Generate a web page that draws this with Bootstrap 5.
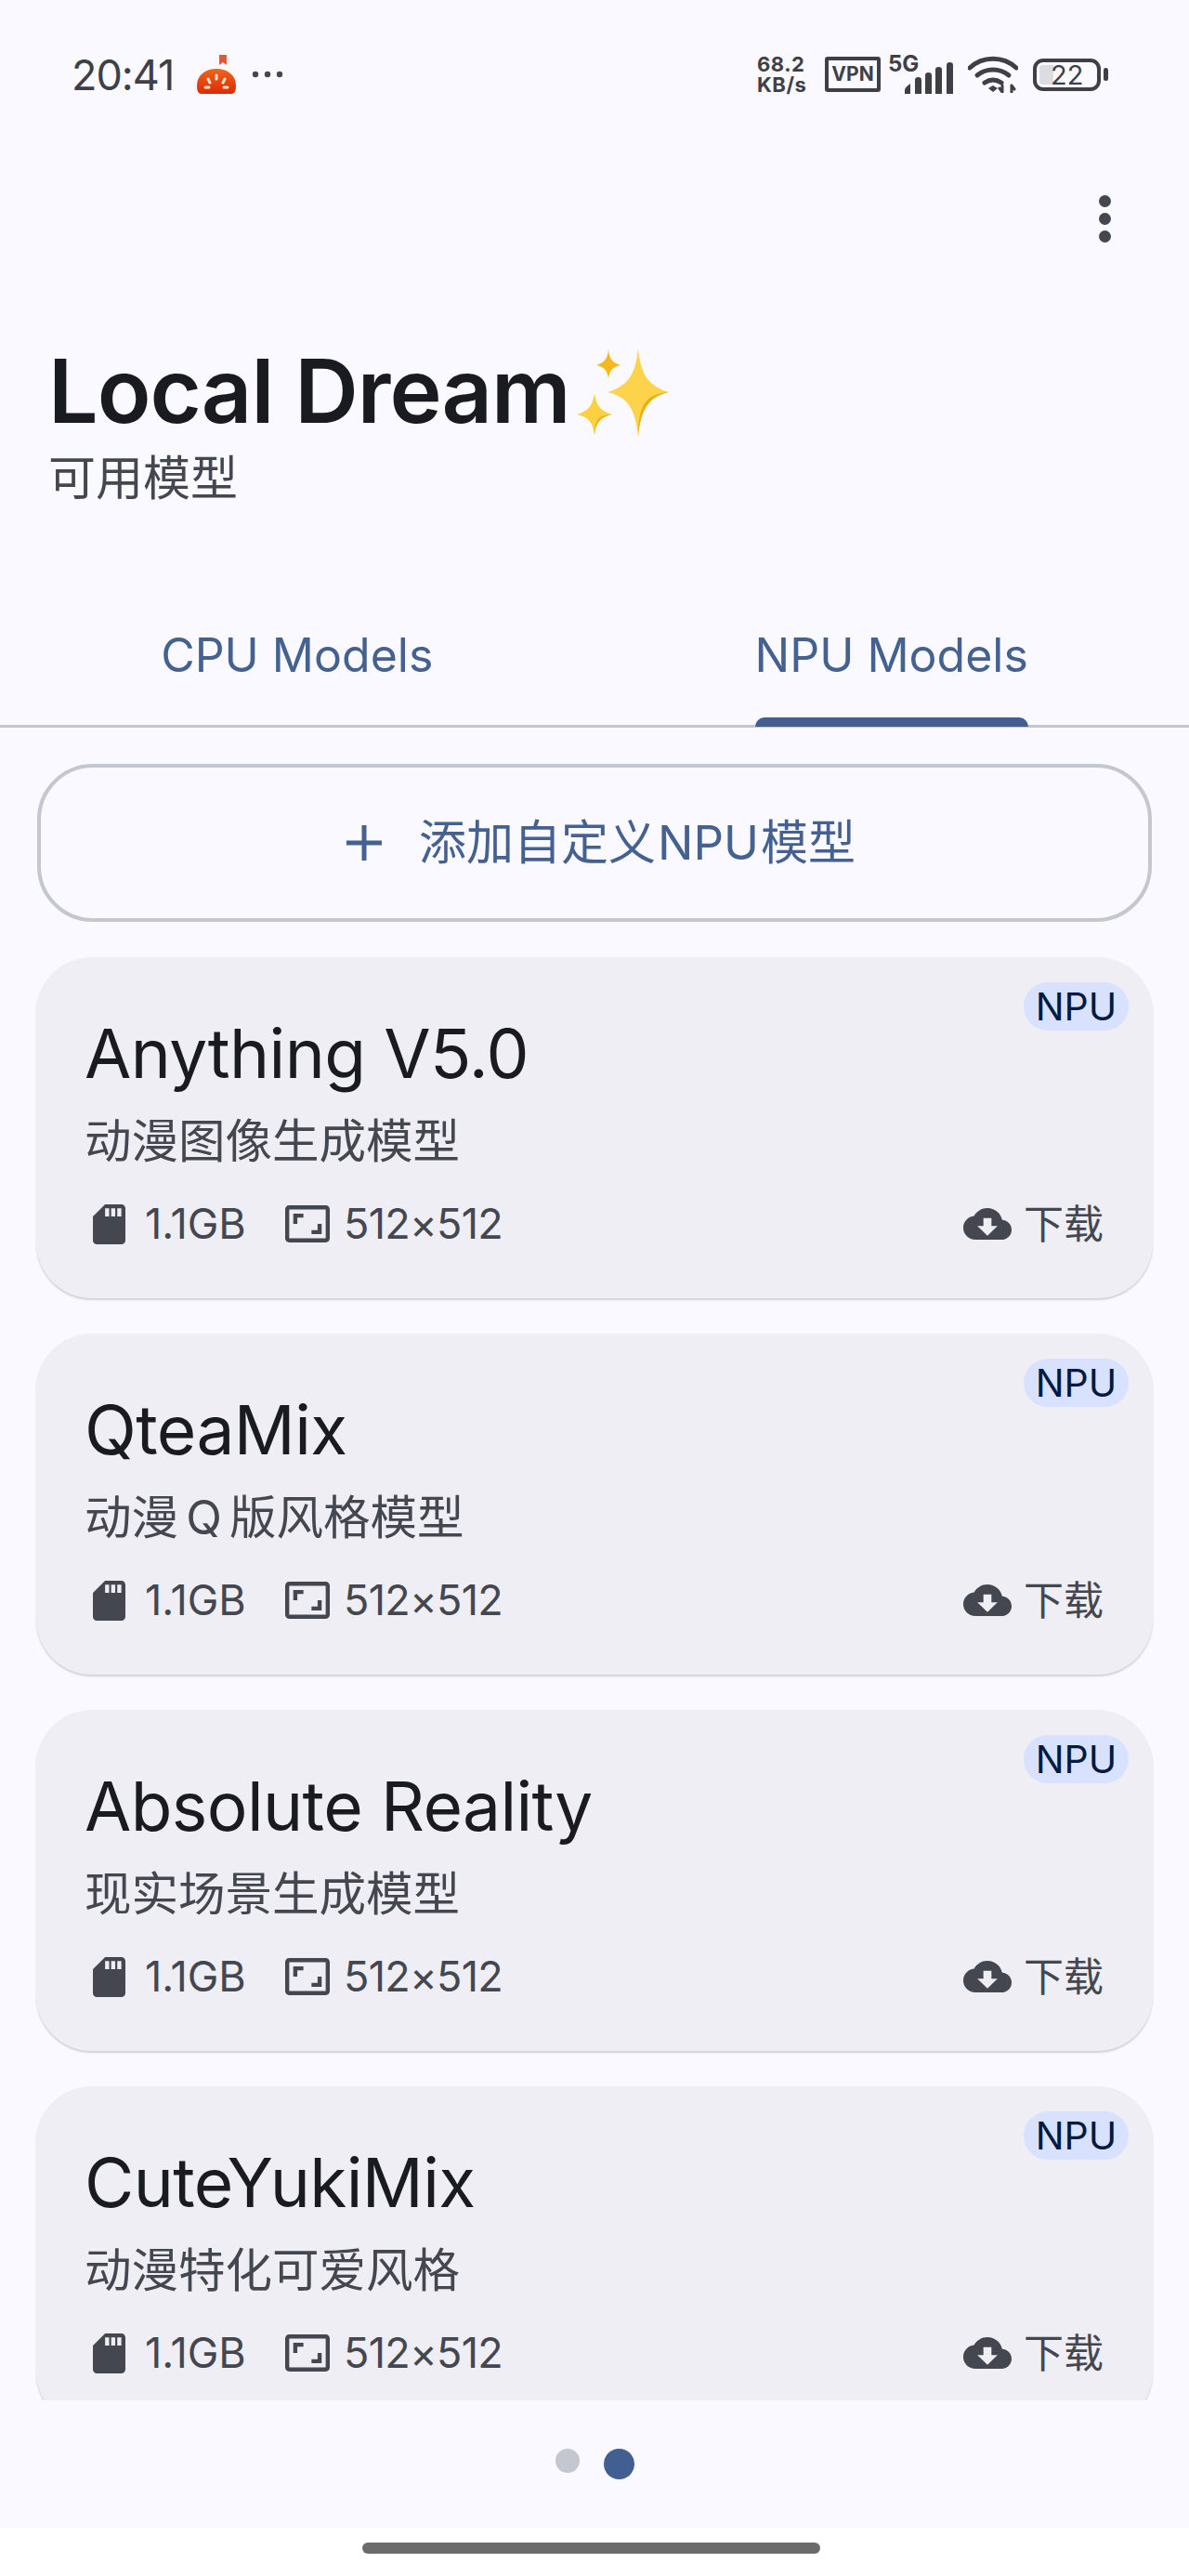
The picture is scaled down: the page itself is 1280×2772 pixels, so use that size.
<!DOCTYPE html>
<html lang="zh-CN">
<head>
  <meta charset="UTF-8">
  <meta name="viewport" content="width=device-width, initial-scale=1.0">
  <title>Local Dream</title>
  <link rel="stylesheet" href="https://cdn.jsdelivr.net/npm/bootstrap@5.3.0/dist/css/bootstrap.min.css">
  <style>
    body {
      font-family: "Inter", "Noto Sans CJK SC", sans-serif;
      background-color: #f9f9ff;
      color: #44474f;
      width: 1280px;
      height: 2772px;
      overflow: hidden;
    }
    .status-bar { height: 160px; padding: 0 87px 0 77px; }
    .status-time { font-size: 45px; line-height: 1; letter-spacing: -1px; color: #3f4047; }
    .status-speed { font-size: 22px; line-height: 22px; letter-spacing: .5px; font-weight: 700; color: #3f4047; width: 65px; }
    .status-five { font-size: 24px; line-height: 1; font-weight: 700; color: #3f4047; }
    .vpn-box { width: 60px; height: 38px; border: 4px solid #3f4047; border-radius: 3px; font-size: 21px; font-weight: 700; line-height: 30px; text-align: center; color: #3f4047; }
    .signal-wrap { width: 70px; height: 42px; }
    .signal-wrap .status-five { position: absolute; left: 0; top: -2px; }
    .signal-wrap svg { position: absolute; right: 0; bottom: 0; }
    .batt-box { width: 73px; height: 35px; border: 4px solid #3f4047; border-radius: 11px; padding-left: 15px; font-size: 29px; line-height: 27px; color: #3f4047; overflow: hidden; }
    .batt-box::before { content: ""; position: absolute; left: 3px; top: 3px; bottom: 3px; width: 15px; background: #dcdce1; border-radius: 4px 0 0 4px; }
    .batt-num { position: relative; }
    .batt-tip { width: 5px; height: 14px; background: #3f4047; border-radius: 3px; margin-left: 3px; }

    .top-actions { height: 150px; padding-right: 84px; padding-top: 50px; }
    .kebab-col { gap: 6px; }
    .kebab-dot { width: 13px; height: 13px; border-radius: 50%; background: #44474f; }

    .title-block { height: 330px; padding-left: 52px; padding-top: 50px; }
    .app-title { font-size: 95px; line-height: 122px; font-weight: 600; letter-spacing: -1px; color: #1a1b20; margin: 0; }
    .app-sub { font-size: 51px; line-height: 60px; color: #44474f; margin-top: 3px; }
    .sparkle-icon { margin-left: 3px; margin-top: 2px; }

    .model-tabs { height: 143px; border-bottom: 3px solid #c4c6d0; }
    .model-tabs .nav-link { height: 140px; padding: 0; color: #44618f; font-size: 50px; line-height: 130px; }
    .tab-label { display: inline-block; height: 140px; position: relative; }
    .tab-on::after { content: ""; position: absolute; left: 0; right: 0; bottom: -2px; height: 10px; background: #415f91; border-radius: 10px 10px 0 0; }

    .model-list { height: 1800px; padding: 39px 39px 0; overflow: hidden; }
    .add-btn { display: flex; align-items: center; justify-content: center; width: 1200px; height: 170px; margin: 0 auto 38px; padding-left: 26px; border: 4px solid #c4c6d0; border-radius: 60px; color: #44618f; font-size: 51px; background: transparent; }
    .add-btn svg { margin-right: 40px; }
    .add-btn .npu-word { margin: 0 2px; }
    .model-card { height: 367px; margin-bottom: 38px; background: #eeeef4; border: 0; border-radius: 60px; padding: 57px 53px 0 52px; box-shadow: 0 2px 2px rgba(0,0,0,.16); }
    .npu-tag { position: absolute; top: 27px; right: 26px; width: 113px; height: 52px; padding: 0; background: #d8e2ff; color: #001a41; font-size: 41px; font-weight: 400; line-height: 52px; border-radius: 26px; }
    .model-name { font-size: 73px; line-height: 94px; color: #1a1b20; margin: 0; font-weight: 400; letter-spacing: -.6px; }
    .model-desc { font-size: 50.500px; line-height: 64px; color: #44474f; margin-top: 15px; word-spacing: -6px; }
    .model-meta { font-size: 45px; line-height: 56px; margin-top: 29px; color: #44474f; }
    .meta-sd { margin-left: 9px; }
    .meta-size { margin-left: 21px; width: 129px; }
    .meta-aspect { margin-left: 22px; }
    .meta-res { margin-left: 15px; letter-spacing: -.7px; }
    .meta-get { font-size: 43px; }
    .meta-get span { margin-left: 13px; }

    .pager { height: 137px; gap: 26px; padding-top: 52px; }
    .pager-off { width: 26px; height: 26px; border-radius: 50%; background: #c4c6d0; }
    .pager-on { width: 33px; height: 33px; border-radius: 50%; background: #415f91; }
    .home-area { height: 52px; background: #fff; padding: 16px 7px 0 0; }
    .home-bar { width: 493px; height: 12px; border-radius: 6px; background: #6b6b6b; }
  </style>
</head>
<body>

<div class="status-bar d-flex align-items-center justify-content-between">
  <div class="d-flex align-items-center">
    <span class="status-time">20:41</span>
    <svg class="ms-4" width="44" height="44" viewBox="0 0 44 44">
      <defs>
        <linearGradient id="tomatoFill" x1="0" y1="0" x2="0" y2="1">
          <stop offset="0" stop-color="#f0651c"/>
          <stop offset="1" stop-color="#dd2a04"/>
        </linearGradient>
      </defs>
      <path d="M25 1h8v11l-4-3-4 3z" fill="#e2583a"/>
      <path d="M22 16c12 0 21 7 21 18 0 5-1 9-5 9H6c-4 0-5-4-5-9 0-11 9-18 21-18z" fill="url(#tomatoFill)"/>
      <g stroke="#fbe3cf" stroke-width="3" stroke-linecap="round">
        <path d="M22 23v4M13 27l2 4M31 27l-2 4M10 36h4M30 36h4"/>
      </g>
    </svg>
    <svg class="ms-3" width="34" height="8" viewBox="0 0 34 8" fill="#44474f">
      <circle cx="4" cy="4" r="3.2"/><circle cx="17" cy="4" r="3.2"/><circle cx="30" cy="4" r="3.2"/>
    </svg>
  </div>
  <div class="d-flex align-items-center">
    <div class="status-speed">68.2<br>KB/s</div>
    <div class="vpn-box ms-2">VPN</div>
    <div class="signal-wrap position-relative ms-2">
      <span class="status-five">5G</span>
      <svg width="52" height="34" viewBox="0 0 52 34" fill="#3f4047">
        <path d="M0 34v-4q0-3 6-7v11zM11 34V19q0-3 3.500-3t3.500 3v15zM22 34V14q0-3 3.500-3t3.500 3v20zM33 34V8q0-3 3.500-3t3.500 3v26zM45 34V3q0-3 3.500-3t3.500 3v31z"/>
      </svg>
    </div>
    <svg class="ms-3" width="54" height="40" viewBox="0 0 54 40" fill="none" stroke="#3f4047" stroke-width="5" stroke-linecap="round">
      <path d="M2 13C16 0 38 0 52 13"/>
      <path d="M10 21c10-8 24-8 34 0"/>
      <path d="M18 29c6-4 12-4 18 0" />
      <path d="M22 35l5 4 5-4-5-3z" fill="#3f4047" stroke="none"/>
      <path d="M37 39v-7M34 35l3 4M47 39v-7M47 32l3 4" stroke-width="3"/>
    </svg>
    <div class="batt-box position-relative ms-3"><span class="batt-num">22</span></div>
    <div class="batt-tip"></div>
  </div>
</div>

<div class="top-actions d-flex justify-content-end">
  <div class="d-flex flex-column kebab-col">
    <div class="kebab-dot"></div>
    <div class="kebab-dot"></div>
    <div class="kebab-dot"></div>
  </div>
</div>

<div class="title-block">
  <div class="d-flex align-items-center">
    <h1 class="app-title">Local Dream</h1>
    <svg class="sparkle-icon" width="108" height="100" viewBox="0 0 108 100">
      <path d="M70 3c3 29 11 40 33 47-22 5-30 18-33 48-3-30-11-43-33-48 22-7 30-18 33-47z" fill="#fdd34b"/>
      <path d="M103 50c-22 5-30 18-33 48 0-24 4-38 16-44 5-2 11-4 17-4z" fill="#efae0b"/>
      <path d="M38 4c1 10 4 14 13 17-9 2-12 6-13 15-1-9-4-13-13-15 9-3 12-7 13-17z" fill="#f4b81f"/>
      <path d="M23 51c2 13 6 19 19 23-13 3-17 8-19 22-2-14-6-19-19-22 13-4 17-10 19-23z" fill="#fbd13f"/>
      <path d="M42 74c-13 3-17 8-19 22 0-10 2-17 8-20 3-1 7-2 11-2z" fill="#efb014"/>
    </svg>
  </div>
  <div class="app-sub">可用模型</div>
</div>

<ul class="nav nav-fill model-tabs">
  <li class="nav-item"><a class="nav-link" href="#"><span class="tab-label">CPU Models</span></a></li>
  <li class="nav-item"><a class="nav-link" href="#"><span class="tab-label tab-on">NPU Models</span></a></li>
</ul>

<div class="model-list">
  <button class="btn add-btn" type="button">
    <svg width="38" height="38" viewBox="0 0 38 38" fill="#44618f"><path d="M16.500 0h5v16.500H38v5H21.500V38h-5V21.500H0v-5h16.500z"/></svg>
    <span>添加自定义<span class="npu-word">NPU</span>模型</span>
  </button>
  <div id="cards"></div>
</div>

<div class="pager d-flex justify-content-center align-items-start">
  <div class="pager-off"></div>
  <div class="pager-on"></div>
</div>
<div class="home-area d-flex justify-content-center">
  <div class="home-bar"></div>
</div>

<script>
  const models = [
    { name: 'Anything V5.0', desc: '动漫图像生成模型' },
    { name: 'QteaMix', desc: '动漫 Q 版风格模型' },
    { name: 'Absolute Reality', desc: '现实场景生成模型' },
    { name: 'CuteYukiMix', desc: '动漫特化可爱风格' }
  ];

  const cards = document.getElementById('cards');
  models.forEach(m => {
    const card = document.createElement('div');
    card.className = 'card model-card position-relative';
    card.innerHTML = `
      <span class="badge npu-tag">NPU</span>
      <h2 class="model-name">${m.name}</h2>
      <div class="model-desc">${m.desc}</div>
      <div class="model-meta d-flex align-items-center">
        <svg class="meta-sd" width="35" height="43" viewBox="4 2 16 20" fill="#44474f" preserveAspectRatio="none"><path d="M18 2h-8L4.020 8 4 20c0 1.100.9 2 2 2h12c1.100 0 2-.9 2-2V4c0-1.100-.9-2-2-2zm-6 6h-2V4h2v4zm3 0h-2V4h2v4zm3 0h-2V4h2v4z"/></svg>
        <span class="meta-size">1.1GB</span>
        <svg class="meta-aspect" width="48" height="40" viewBox="1 3 22 18" fill="#44474f" preserveAspectRatio="none"><path d="M19 12h-2v3h-3v2h5v-5zM7 9h3V7H5v5h2V9zm14-6H3c-1.100 0-2 .9-2 2v14c0 1.100.9 2 2 2h18c1.100 0 2-.9 2-2V5c0-1.100-.9-2-2-2zm0 16.010H3V4.990h18v14.020z"/></svg>
        <span class="meta-res">512×512</span>
        <div class="ms-auto d-flex align-items-center meta-get">
          <svg width="52" height="34" viewBox="0 4 24 16" fill="#44474f" preserveAspectRatio="none"><path d="M19.350 10.040C18.670 6.590 15.640 4 12 4 9.110 4 6.600 5.640 5.350 8.040 2.340 8.360 0 10.910 0 14c0 3.310 2.690 6 6 6h13c2.760 0 5-2.240 5-5 0-2.640-2.050-4.780-4.650-4.960zM17 13l-5 5-5-5h3V9h4v4h3z"/></svg>
          <span>下载</span>
        </div>
      </div>`;
    cards.appendChild(card);
  });
</script>

<script src="https://cdn.jsdelivr.net/npm/bootstrap@5.3.0/dist/js/bootstrap.bundle.min.js"></script>
</body>
</html>
